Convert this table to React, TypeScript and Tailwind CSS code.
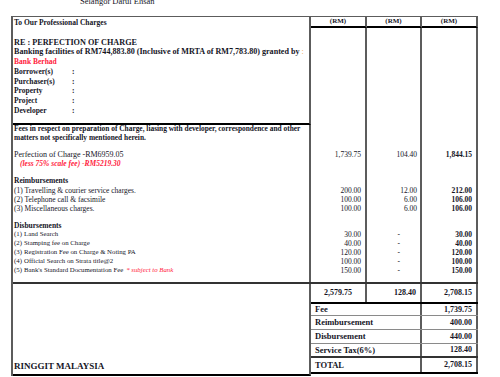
import type { ReactNode } from "react";

type RowProps = {
  h: string;
  left?: ReactNode;
  a?: string;
  b?: string;
  c?: string;
  line?: boolean;
};

const grid = "grid grid-cols-[298px_56px_55px_56px]";
const vline = "border-r-2 border-r-[#5c5c5c]";

function Row({ h, left, a, b, c, line }: RowProps) {
  return (
    <div className={`${grid} ${h}`}>
      <div
        className={`flex items-center whitespace-nowrap pl-px ${vline} ${line ? "border-b-2 border-b-black" : ""}`}
      >
        {left}
      </div>
      <div className={`flex items-center justify-end pr-[4px] text-[7.5px] ${vline}`}>{a}</div>
      <div
        className={`flex items-center justify-end text-[7.5px] ${b === "-" ? "pr-[20px]" : "pr-[3px]"} ${vline}`}
      >
        {b}
      </div>
      <div className={`flex items-center justify-end pr-[4px] text-[7.5px] font-bold ${vline}`}>{c}</div>
    </div>
  );
}

function Party({ label }: { label: string }) {
  return (
    <span className="font-bold">
      <span className="inline-block w-[58px]">{label}</span>:
    </span>
  );
}

function Disb({ n, text, note }: { n: string; text: string; note?: string }) {
  return (
    <span className="text-[6.8px]">
      <span className="inline-block w-[10px]">{n}</span>
      {text}
      {note && <span className="ml-[3px] italic text-[#ff1a3c]">{note}</span>}
    </span>
  );
}

function Summary({ label, value, h, edge }: { label: string; value: string; h: string; edge: string }) {
  return (
    <div className={`grid grid-cols-[111px_56px] ${h} ${edge}`}>
      <div className={`flex items-center pl-[4px] text-[8.5px] ${vline}`}>{label}</div>
      <div className={`flex items-center justify-end pr-[4px] text-[8px] ${vline}`}>{value}</div>
    </div>
  );
}

export default function App() {
  return (
    <div className="h-[377px] w-[500px] overflow-hidden bg-white font-['Liberation_Serif','Times_New_Roman',serif] leading-none text-[#15151f]">
      <div className="h-[16px] overflow-hidden">
        <p className="-mt-[3px] pl-[80px] text-[8.5px]">Selangor Darul Ehsan</p>
      </div>

      <div className="ml-[11px] w-[467px] border-l-2 border-t border-[#5c5c5c] text-[7.5px]">
        <div className={`${grid} h-[11px]`}>
          <div className={`flex items-center pl-px font-bold ${vline}`}>To Our Professional Charges</div>
          <div className={`flex items-center justify-center border-b-2 border-b-black text-[7px] font-bold ${vline}`}>(RM)</div>
          <div className={`flex items-center justify-center border-b-2 border-b-black text-[7px] font-bold ${vline}`}>(RM)</div>
          <div className={`flex items-center justify-center border-b-2 border-b-black text-[7px] font-bold ${vline}`}>(RM)</div>
        </div>

        <Row h="h-[10px]" />
        <Row h="h-[10px]" left={<span className="text-[8.2px] font-bold">RE : PERFECTION OF CHARGE</span>} />
        <Row
          h="h-[9px]"
          left={
            <span className="text-[8.1px] font-bold">
              Banking facilities of RM744,883.80 (Inclusive of MRTA of RM7,783.80) granted by{" "}
              <span className="font-normal text-[#f0a040]">:</span>
            </span>
          }
        />
        <Row h="h-[10px]" left={<span className="font-bold text-[#ff1a3c]">Bank Berhad</span>} />
        <Row h="h-[10px]" left={<Party label="Borrower(s)" />} />
        <Row h="h-[9px]" left={<Party label="Purchaser(s)" />} />
        <Row h="h-[10px]" left={<Party label="Property" />} />
        <Row h="h-[10px]" left={<Party label="Project" />} />
        <Row h="h-[10px]" left={<Party label="Developer" />} />
        <Row h="h-[9px]" line />
        <Row
          h="h-[8px]"
          left={
            <span className="text-[7.4px] font-bold">
              Fees in respect on preparation of Charge, liasing with developer, correspondence and other
            </span>
          }
        />
        <Row h="h-[10px]" left={<span className="text-[7.4px] font-bold">matters not specifically mentioned herein.</span>} />
        <Row h="h-[7px]" />
        <Row
          h="h-[10px]"
          left={<span className="text-[8px]">Perfection of Charge -RM6959.05</span>}
          a="1,739.75"
          b="104.40"
          c="1,844.15"
        />
        <Row
          h="h-[8px]"
          left={
            <span className="pl-[6px] text-[7.5px] font-bold italic text-[#ff1a3c]">(less 75% scale fee) -RM5219.30</span>
          }
        />
        <Row h="h-[8px]" />
        <Row h="h-[10px]" left={<span className="font-bold">Reimbursements</span>} />
        <Row h="h-[9px]" left="(1) Travelling & courier service charges." a="200.00" b="12.00" c="212.00" />
        <Row h="h-[9px]" left="(2) Telephone call & facsimile" a="100.00" b="6.00" c="106.00" />
        <Row h="h-[9px]" left="(3) Miscellaneous charges." a="100.00" b="6.00" c="106.00" />
        <Row h="h-[8px]" />
        <Row h="h-[9px]" left={<span className="font-bold">Disbursements</span>} />
        <Row h="h-[9px]" left={<Disb n="(1)" text="Land Search" />} a="30.00" b="-" c="30.00" />
        <Row h="h-[9px]" left={<Disb n="(2)" text="Stamping fee on Charge" />} a="40.00" b="-" c="40.00" />
        <Row h="h-[9px]" left={<Disb n="(3)" text="Registration Fee on Charge & Noting PA" />} a="120.00" b="-" c="120.00" />
        <Row h="h-[9px]" left={<Disb n="(4)" text="Official Search on Strata title@2" />} a="100.00" b="-" c="100.00" />
        <Row
          h="h-[9px]"
          left={<Disb n="(5)" text="Bank's Standard Documentation Fee" note="* subject to Bank" />}
          a="150.00"
          b="-"
          c="150.00"
        />
        <Row h="h-[7px]" />
        <div className="h-[2px] bg-[#333]" />

        <div className="flex">
          <div
            className={`flex h-[92px] w-[298px] items-end border-b-2 border-b-black pb-[3px] pl-px text-[9px] font-bold ${vline}`}
          >
            RINGGIT MALAYSIA
          </div>
          <div className="w-[167px] font-bold">
            <div className="grid h-[20px] grid-cols-[56px_55px_56px] border-b-2 border-b-black text-[8px]">
              <div className={`flex items-center justify-center ${vline}`}>2,579.75</div>
              <div className={`flex items-center justify-end pr-[4px] ${vline}`}>128.40</div>
              <div className={`flex items-center justify-end pr-[4px] ${vline}`}>2,708.15</div>
            </div>
            <Summary label="Fee" value="1,739.75" h="h-[12px]" edge="border-b border-b-[#8a8a8a]" />
            <Summary label="Reimbursement" value="400.00" h="h-[14px]" edge="border-b border-b-[#8a8a8a]" />
            <Summary label="Disbursement" value="440.00" h="h-[14px]" edge="border-b border-b-[#8a8a8a]" />
            <Summary label="Service Tax(6%)" value="128.40" h="h-[14px]" edge="border-b-2 border-b-[#333]" />
            <Summary label="TOTAL" value="2,708.15" h="h-[16px]" edge="border-b-2 border-b-black" />
          </div>
        </div>
      </div>
    </div>
  );
}
